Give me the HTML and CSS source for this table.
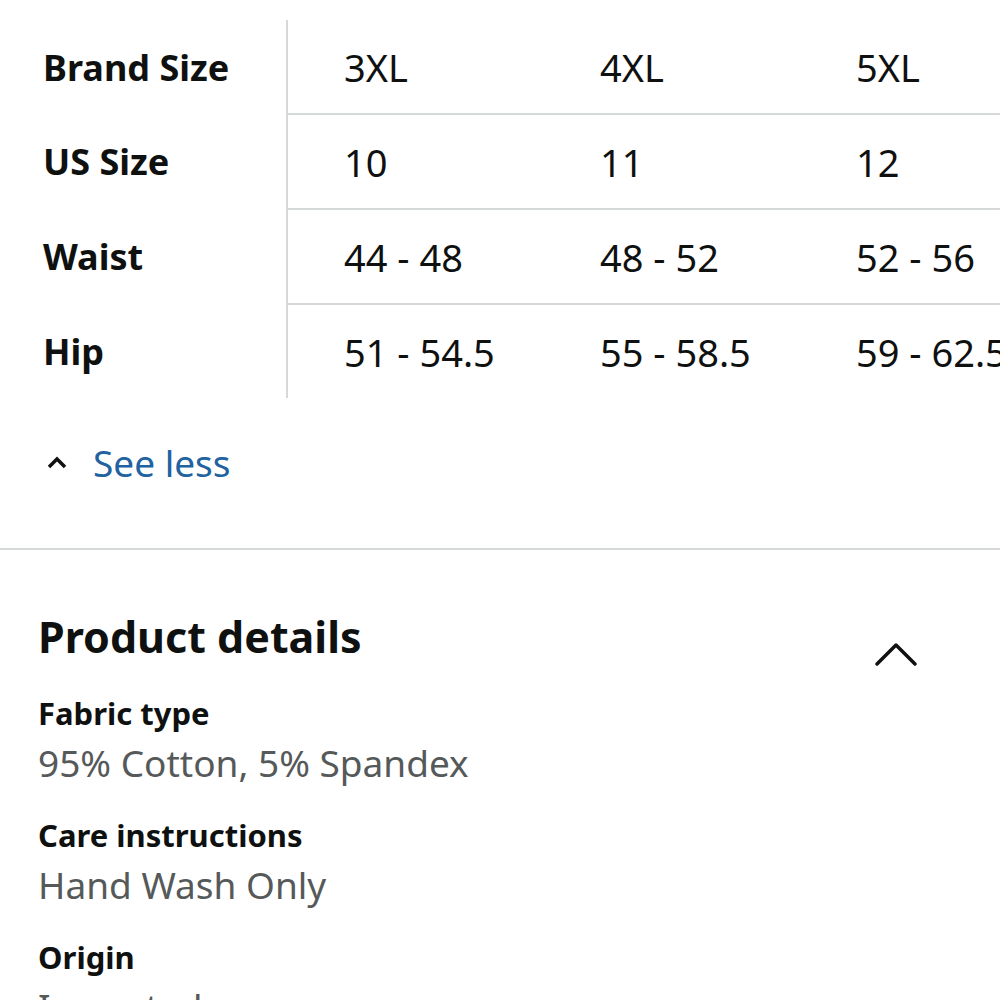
FILE: index.html
```html
<!DOCTYPE html>
<html lang="en">

<head>
    <meta charset="UTF-8">
    <meta name="viewport" content="width=device-width, initial-scale=1.0">
    <title>Size chart</title>
    <link rel="stylesheet" href="styles.css">
</head>

<body>
    <table class="size-chart">
        <tr>
            <th>Brand Size</th>
            <td>3XL</td>
            <td>4XL</td>
            <td>5XL</td>
        </tr>
        <tr>
            <th>US Size</th>
            <td>10</td>
            <td>11</td>
            <td>12</td>
        </tr>
        <tr>
            <th>Waist</th>
            <td>44 - 48</td>
            <td>48 - 52</td>
            <td>52 - 56</td>
        </tr>
        <tr>
            <th>Hip</th>
            <td>51 - 54.5</td>
            <td>55 - 58.5</td>
            <td>59 - 62.5</td>
        </tr>
    </table>

    <div class="see-less">
        <svg class="caret" width="20" height="14" viewBox="0 0 20 14">
            <path d="M2 12 L10 4 L18 12" fill="none" stroke="#111" stroke-width="3.5" />
        </svg>
        <a href="#">See less</a>
    </div>

    <hr class="divider">

    <section class="details">
        <div class="details-head">
            <h2>Product details</h2>
            <svg class="chevron" width="44" height="26" viewBox="0 0 44 26">
                <path d="M3 23 L22 4 L41 23" fill="none" stroke="#111" stroke-width="3.5" stroke-linecap="round" stroke-linejoin="round" />
            </svg>
        </div>

        <dl>
            <dt>Fabric type</dt>
            <dd>95% Cotton, 5% Spandex</dd>
            <dt>Care instructions</dt>
            <dd>Hand Wash Only</dd>
            <dt>Origin</dt>
            <dd>Imported</dd>
        </dl>
    </section>
</body>

</html>
```

FILE: styles.css
```css
* {
    padding: 0;
    margin: 0;
}

html,
body {
    height: 100%;
    background-color: white;
    color: #0f1111;
    overflow: hidden;
    font-family: "Noto Sans", "Liberation Sans", sans-serif;
}

/* size chart */
table.size-chart {
    margin-top: 20px;
    border-collapse: collapse;
    table-layout: fixed;
    width: 1054px;
}

table.size-chart th,
table.size-chart td {
    height: 93px;
    font-size: 38px;
    text-align: left;
    vertical-align: middle;
    white-space: nowrap;
}

table.size-chart th {
    width: 243px;
    padding-left: 43px;
    font-size: 36px;
    font-weight: bold;
}

table.size-chart td {
    width: 200px;
    padding-left: 56px;
    font-weight: normal;
}

table.size-chart td:nth-child(2) {
    border-left: 2px solid #d5d9d9;
}

table.size-chart tr + tr td {
    border-top: 2px solid #d5d9d9;
}

/* see less */
.see-less {
    display: flex;
    align-items: center;
    gap: 26px;
    padding: 31px 0 0 47px;
    height: 66px;
}

.see-less a {
    font-size: 37px;
    color: #2162a1;
    text-decoration: none;
}

.divider {
    margin-top: 53px;
    border: none;
    border-top: 2px solid #d5d9d9;
}

/* product details */
.details {
    padding: 0 38px;
}

.details-head {
    display: flex;
    justify-content: space-between;
    align-items: center;
    margin-top: 58px;
    height: 56px;
}

.details-head h2 {
    font-size: 43px;
    font-weight: bold;
}

.details-head .chevron {
    margin: 36px 44px 0 0;
}

.details dt {
    margin-top: 22px;
    font-size: 31px;
    font-weight: bold;
    line-height: 44px;
}

.details dd {
    font-size: 37px;
    color: #565959;
    line-height: 56px;
}

.details dt:first-child {
    margin-top: 27px;
}
```
